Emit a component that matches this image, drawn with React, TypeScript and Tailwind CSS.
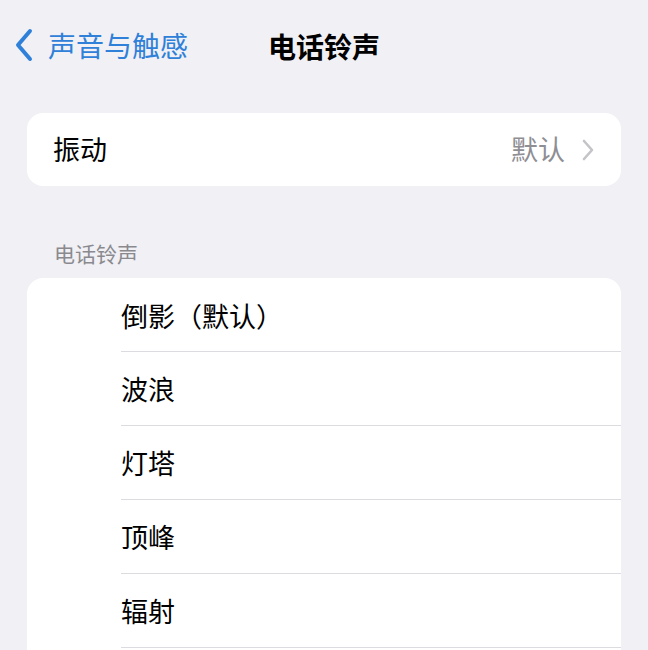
const rings = ['倒影（默认）', '波浪', '灯塔', '顶峰', '辐射'];

function App() {
  return (
    <div
      className="h-[650px] w-full overflow-hidden bg-[#f0f0f5] text-black"
      style={{ fontFamily: '"Noto Sans CJK SC", "Noto Sans", sans-serif' }}
    >
      <header className="relative flex h-[92px] items-center justify-center">
        <div className="absolute left-[14px] top-[28px] flex items-center gap-[14px] text-[#2f80d8]">
          <svg width="20" height="34" viewBox="0 0 20 34" fill="none">
            <path d="M16 3 L4 17 L16 31" stroke="currentColor" strokeWidth="4" strokeLinecap="round" strokeLinejoin="round" />
          </svg>
          <span className="text-[28px] leading-none">声音与触感</span>
        </div>
        <h1 className="text-[28px] font-bold leading-none">电话铃声</h1>
      </header>

      <div className="px-[27px] pt-[21px]">
        <div className="flex h-[73px] items-center justify-between rounded-[16px] bg-white pl-[26px] pr-[26px]">
          <span className="text-[27px]">振动</span>
          <div className="flex items-center gap-[16px]">
            <span className="text-[27px] text-[#8e8e93]">默认</span>
            <svg width="14" height="22" viewBox="0 0 14 22" fill="none">
              <path d="M3 2 L11 11 L3 20" stroke="#c4c4c8" strokeWidth="2.6" strokeLinecap="round" strokeLinejoin="round" />
            </svg>
          </div>
        </div>

        <div className="pl-[27px] pt-[57px] pb-[14px] text-[21px] leading-none text-[#8a8a8e]">电话铃声</div>

        <div className="rounded-t-[16px] bg-white pb-[20px]">
          {rings.map((name, i) => (
            <div key={name} className="pl-[94px]">
              <div
                className={
                  i === 0
                    ? 'flex h-[74px] items-center border-b border-[#dcdce0] pt-[2px]'
                    : 'flex h-[74px] items-center border-b border-[#dcdce0]'
                }
              >
                <span className="text-[27px] leading-none">{name}</span>
              </div>
            </div>
          ))}
        </div>
      </div>
    </div>
  );
}

export default App;
